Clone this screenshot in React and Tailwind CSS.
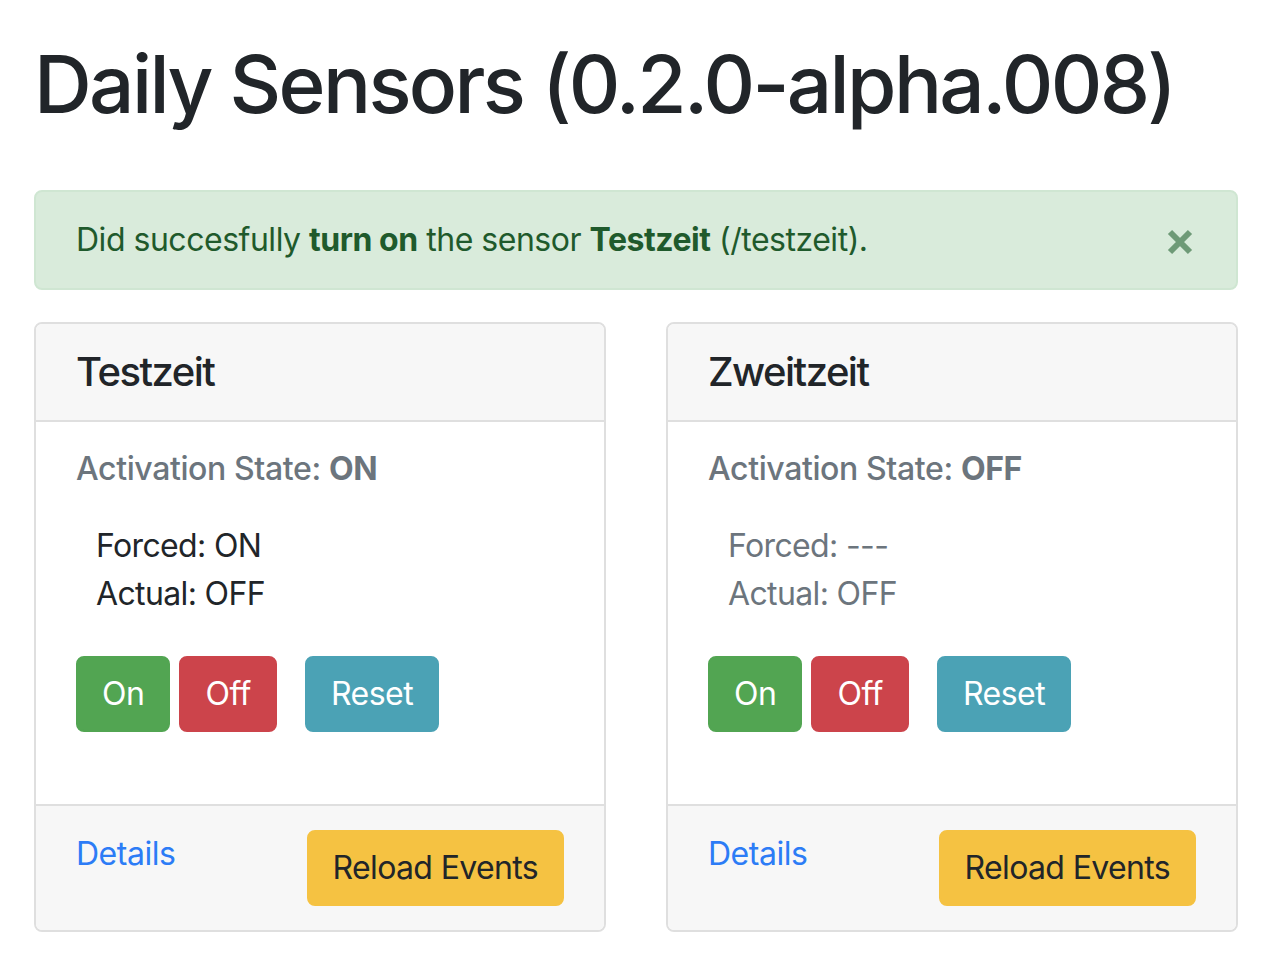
import React from "react";

const font = { fontFamily: 'Inter, "Liberation Sans", sans-serif' };

function Btn({ children, cls }) {
  return (
    <button
      className={`h-[76px] px-[24px] border-2 rounded-[8px] text-[32px] leading-[48px] tracking-[-0.015em] text-white ${cls}`}
    >
      {children}
    </button>
  );
}

function Card({ name, state, forced, actual, muted }) {
  const lineColor = muted ? "text-[#6c757d]" : "text-[#212529]";
  return (
    <div className="border-2 border-[#dfdfdf] rounded-[8px] overflow-hidden flex flex-col bg-white">
      <div className="bg-[#f7f7f7] border-b-2 border-[#dfdfdf] px-[40px] py-[24px]">
        <h5 className="text-[40px] leading-[48px] font-medium tracking-[-0.038em] text-[#212529]">{name}</h5>
      </div>
      <div className="px-[40px] pt-[40px] pb-[40px]">
        <h6 className="mt-[-12px] text-[32px] leading-[38px] font-medium tracking-[-0.012em] text-[#6c757d]">
          Activation State: <span className="font-bold">{state}</span>
        </h6>
        <div className={`mt-[34px] pl-[20px] text-[32px] leading-[48px] tracking-[-0.02em] ${lineColor}`}>
          <div>Forced: {forced}</div>
          <div>Actual: {actual}</div>
        </div>
        <div className="mt-[38px] mb-[32px] flex items-center">
          <Btn cls="bg-[#52a552] border-[#52a552]">On</Btn>
          <Btn cls="ml-[9px] bg-[#cc444b] border-[#cc444b]">Off</Btn>
          <Btn cls="ml-[28px] bg-[#4ba2b5] border-[#4ba2b5]">Reset</Btn>
        </div>
      </div>
      <div className="bg-[#f7f7f7] border-t-2 border-[#dfdfdf] px-[40px] py-[24px] flex justify-between items-start">
        <a className="text-[32px] leading-[48px] tracking-[-0.015em] text-[#2c7cf6]">Details</a>
        <button className="h-[76px] px-[24px] border-2 border-[#f5c242] bg-[#f5c242] rounded-[8px] text-[32px] leading-[48px] tracking-[-0.02em] text-[#212529]">
          Reload Events
        </button>
      </div>
    </div>
  );
}

export default function App() {
  return (
    <div style={font} className="min-h-[962px] bg-white px-[34px] pt-[36px] text-[#212529]">
      <h1 className="text-[80px] leading-[96px] font-medium tracking-[-0.033em] whitespace-nowrap text-[#212529]">
        Daily Sensors (0.2.0-alpha.008)
      </h1>
      <div className="mt-[58px] border-2 border-[#cfe6d2] bg-[#d9ebdb] rounded-[8px] px-[40px] py-[24px] flex items-center justify-between text-[32px] leading-[48px] tracking-[-0.015em] text-[#1f5a2c]">
        <div>
          Did succesfully <b className="font-bold">turn on</b> the sensor{" "}
          <b className="font-bold">Testzeit</b> (/testzeit).
        </div>
        <svg width="26" height="26" viewBox="0 0 26 26" className="mr-[3px] mt-[4px]">
          <path d="M3 3 L23 23 M23 3 L3 23" stroke="#155724" strokeOpacity="0.55" strokeWidth="6" />
        </svg>
      </div>
      <div className="mt-[32px] grid grid-cols-2 gap-[60px]">
        <Card name="Testzeit" state="ON" forced="ON" actual="OFF" />
        <Card name="Zweitzeit" state="OFF" forced="---" actual="OFF" muted />
      </div>
    </div>
  );
}
